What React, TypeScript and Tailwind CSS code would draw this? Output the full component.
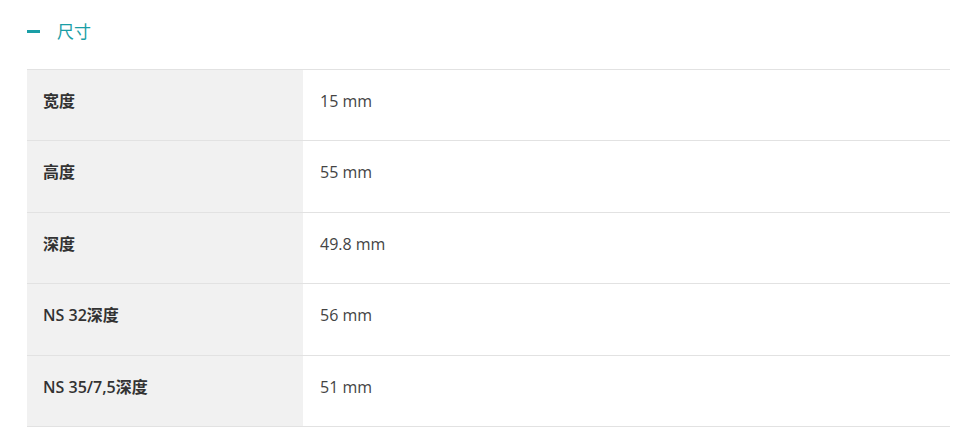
const rows = [
  { label: '宽度', value: '15 mm' },
  { label: '高度', value: '55 mm' },
  { label: '深度', value: '49.8 mm' },
  { label: 'NS 32深度', value: '56 mm' },
  { label: 'NS 35/7,5深度', value: '51 mm' },
]

export default function App() {
  return (
    <div
      className="bg-white w-[961px] h-[447px] text-[#333] pl-[27px] pr-[11px]"
      style={{ fontFamily: '"Open Sans", "Noto Sans CJK SC", sans-serif' }}
    >
      {/* 标题 */}
      <div className="flex items-center h-[69px] pb-[6px] text-[#1a9ea6] text-[17px]">
        <span className="block w-[13px] h-[3px] bg-[#1a9ea6]" />
        <span className="ml-[17px]">尺寸</span>
      </div>

      {/* 表格 */}
      <div className="border-t border-[#e2e2e2]">
        {rows.map((r, i) => (
          <div key={i} className="flex h-[71.4px] border-b border-[#e2e2e2] text-[16px] leading-[22px]">
            <div className="w-[276px] bg-[#f1f1f1] pl-[16px] pt-[20px] font-semibold text-[#333]">
              {r.label}
            </div>
            <div className="flex-1 pl-[17px] pt-[20px] text-[#444]">{r.value}</div>
          </div>
        ))}
      </div>
    </div>
  )
}
